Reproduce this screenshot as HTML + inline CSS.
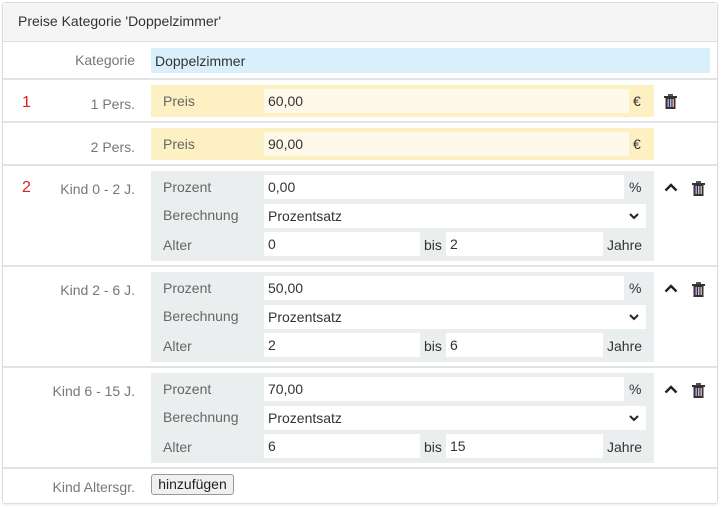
<!DOCTYPE html>
<html><head><meta charset="utf-8"><style>
*{box-sizing:border-box}
body{margin:0;width:722px;height:508px;background:#fff;font-family:"Liberation Sans",sans-serif;font-size:14px;color:#333;position:relative;overflow:hidden}
.a{position:absolute}
.panel{left:2px;top:2px;width:716px;height:502px;border:1px solid #ddd;border-radius:3px;box-shadow:0 1px 2px rgba(0,0,0,.08)}
.hdr{left:3px;top:3px;width:714px;height:39px;background:#f5f5f5;border-bottom:1px solid #ddd}
.line{left:3px;width:714px;height:2px;background:#e3e3e3}
.lbl{color:#777;text-align:right;width:135px;left:0}
.num{color:#e02020;font-size:16px;left:22px}
.yel{background:#fdf0c2}
.inp{background:#fff;color:#333;padding-left:4px;line-height:24px}
.gry{background:#ebeeef}
.gl{color:#666}
</style></head><body>
<div class="a panel"></div>
<div class="a hdr"></div>
<div class="a" style="left:18px;top:13px;color:#333">Preise Kategorie 'Doppelzimmer'</div>
<div class="a line" style="top:78px"></div>
<div class="a line" style="top:121px"></div>
<div class="a line" style="top:164px"></div>
<div class="a line" style="top:265px"></div>
<div class="a line" style="top:366px"></div>
<div class="a line" style="top:467px"></div>

<div class="a lbl" style="top:52px">Kategorie</div>
<div class="a" style="left:151px;top:48px;width:559px;height:25px;background:#d9f0fc;padding-left:4px;line-height:26px">Doppelzimmer</div>

<div class="a num" style="top:94px">1</div>
<div class="a lbl" style="top:96px">1 Pers.</div>
<div class="a yel" style="left:151px;top:85px;width:503px;height:32px"></div>
<div class="a gl" style="left:163px;top:93px">Preis</div>
<div class="a inp" style="left:264px;top:89px;width:365px;height:24px;background:#fef9e9">60,00</div>
<div class="a" style="left:633px;top:93px">€</div>

<div class="a lbl" style="top:139px">2 Pers.</div>
<div class="a yel" style="left:151px;top:128px;width:503px;height:32px"></div>
<div class="a gl" style="left:163px;top:136px">Preis</div>
<div class="a inp" style="left:264px;top:132px;width:365px;height:24px;background:#fef9e9">90,00</div>
<div class="a" style="left:633px;top:136px">€</div>

<svg class="a" style="left:664px;top:94px" width="13" height="15" viewBox="0 0 13 15"><rect x="4" y="0" width="5" height="2" fill="#555"/><rect x="0" y="2" width="13" height="2" fill="#333"/><rect x="1.5" y="4" width="10" height="11" fill="#333"/><rect x="3.5" y="5" width="1.4" height="8" fill="#c8a0e0"/><rect x="6" y="5" width="1.4" height="8" fill="#a0c8f0"/><rect x="8.5" y="5" width="1.4" height="8" fill="#f0b0a0"/></svg>

<div class="a num" style="top:179px">2</div>

<!-- kid blocks -->
<div id="k"></div>
<div class="a lbl" style="top:181px">Kind 0 - 2 J.</div>
<div class="a lbl" style="top:282px">Kind 2 - 6 J.</div>
<div class="a lbl" style="top:383px">Kind 6 - 15 J.</div>

<div class="a lbl" style="top:479px">Kind Altersgr.</div>
<div class="a" style="left:151px;top:474px;width:83px;height:21px;border:1px solid #999;border-radius:3px;background:#f0f0f0;text-align:center;line-height:19px;color:#222">hinzufügen</div>

<script>
var d=[[171,'0,00','0','2'],[272,'50,00','2','6'],[373,'70,00','6','15']];
var h='';
d.forEach(function(r){var t=r[0];
h+='<div class="a gry" style="left:151px;top:'+t+'px;width:503px;height:90px"></div>'+
'<div class="a gl" style="left:163px;top:'+(t+8)+'px">Prozent</div>'+
'<div class="a inp" style="left:264px;top:'+(t+4)+'px;width:360px;height:24px">'+r[1]+'</div>'+
'<div class="a" style="left:629px;top:'+(t+8)+'px">%</div>'+
'<div class="a gl" style="left:163px;top:'+(t+36)+'px">Berechnung</div>'+
'<div class="a inp" style="left:264px;top:'+(t+33)+'px;width:382px;height:24px;padding-left:4px">Prozentsatz</div>'+
'<svg class="a" style="left:629px;top:'+(t+42)+'px" width="10" height="7" viewBox="0 0 10 7"><path d="M1 1L5 5L9 1" stroke="#222" stroke-width="2" fill="none"/></svg>'+
'<div class="a gl" style="left:163px;top:'+(t+66)+'px">Alter</div>'+
'<div class="a inp" style="left:264px;top:'+(t+61)+'px;width:156px;height:24px">'+r[2]+'</div>'+
'<div class="a" style="left:424px;top:'+(t+66)+'px">bis</div>'+
'<div class="a inp" style="left:446px;top:'+(t+61)+'px;width:157px;height:24px">'+r[3]+'</div>'+
'<div class="a" style="left:607px;top:'+(t+66)+'px">Jahre</div>'+
'<svg class="a" style="left:664px;top:'+(t+12)+'px" width="14" height="9" viewBox="0 0 14 9"><path d="M1.5 7.5L7 2L12.5 7.5" stroke="#222" stroke-width="2.4" fill="none"/></svg>'+
'<svg class="a" style="left:692px;top:'+(t+10)+'px" width="13" height="15" viewBox="0 0 13 15"><rect x="4" y="0" width="5" height="2" fill="#555"/><rect x="0" y="2" width="13" height="2" fill="#333"/><rect x="1.5" y="4" width="10" height="11" fill="#333"/><rect x="3.5" y="5" width="1.4" height="8" fill="#c8a0e0"/><rect x="6" y="5" width="1.4" height="8" fill="#a0c8f0"/><rect x="8.5" y="5" width="1.4" height="8" fill="#f0b0a0"/></svg>';
});
document.getElementById('k').outerHTML=h;
</script>
</body></html>
